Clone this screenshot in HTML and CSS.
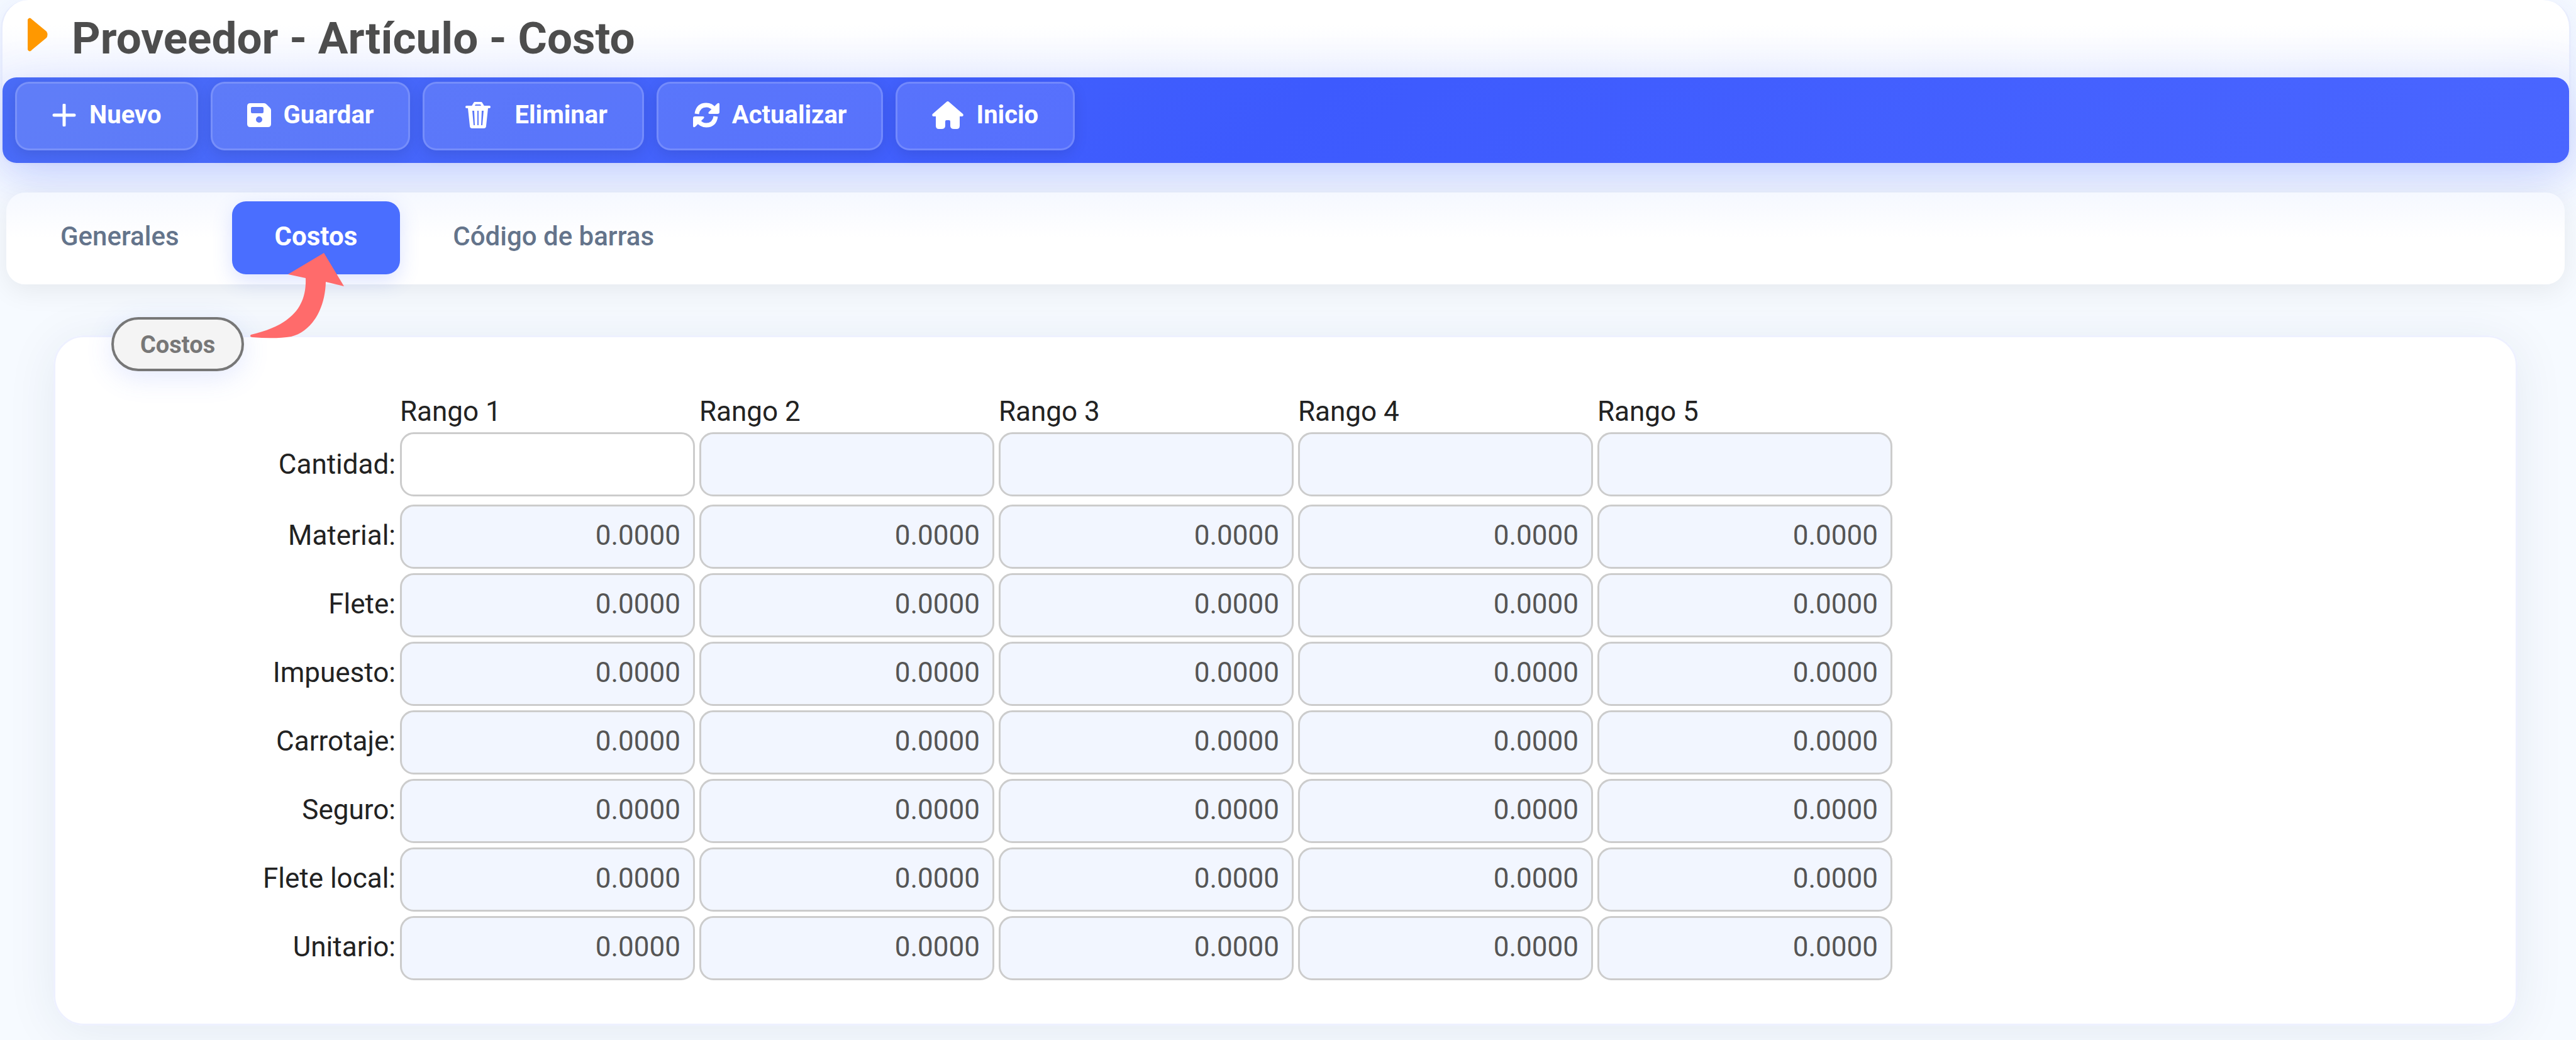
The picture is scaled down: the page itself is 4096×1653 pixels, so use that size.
FILE: index.html
```html
<!DOCTYPE html>
<html lang="es">
<head>
<meta charset="UTF-8">
<meta name="viewport" content="width=device-width,initial-scale=1">
<title>Proveedor - Artículo - Costo</title>
<link rel="stylesheet" href="styles.css">
</head>
<body>

<header class="cabecera">
  <div class="titulo">
    <svg class="flecha-titulo" viewBox="0 0 32 54"><path d="M0 3Q3-2 7 3L30 22Q33 27 30 32L7 51Q3 56 0 51Z"/></svg>
    <h1>Proveedor - Artículo - Costo</h1>
  </div>
  <div class="toolbar">
    <button type="button" id="btnNuevo">
      <svg class="ico-nuevo" viewBox="0 0 36 36"><path d="M18 2V34M2 18H34" fill="none" stroke="#fff" stroke-width="5" stroke-linecap="round"/></svg>
      Nuevo
    </button>
    <button type="button" id="btnGuardar">
      <svg class="ico-guardar" viewBox="0 0 38 38"><path fill-rule="evenodd" d="M5 0H27Q29 0 31 2L36 7Q38 9 38 11V33Q38 38 33 38H5Q0 38 0 33V5Q0 0 5 0ZM8 6Q6 6 6 8V14Q6 16 8 16H24Q26 16 26 14V8Q26 6 24 6ZM19 21A5 5 0 1 0 19 31A5 5 0 1 0 19 21Z"/></svg>
      Guardar
    </button>
    <button type="button" id="btnEliminar">
      <svg class="ico-eliminar" viewBox="0 0 68 42"><path d="M12 8H48M22 7L25 2H35L38 7" fill="none" stroke="#fff" stroke-width="4" stroke-linecap="round" stroke-linejoin="round"/><path fill-rule="evenodd" d="M14 10H46L43 38Q43 42 39 42H21Q17 42 17 38ZM21 14L23 37H25L24 14ZM29 14V37H31V14ZM36 14L35 37H37L39 14Z"/></svg>
      Eliminar
    </button>
    <button type="button" id="btnActualizar">
      <svg class="ico-actualizar" viewBox="0 0 42 40"><path d="M6 18Q8 4 21 4Q29 4 34 11" fill="none" stroke="#fff" stroke-width="7"/><path d="M42 3V15Q42 18 39 18H27Q23 18 25 15L38 2Q42-1 42 3Z"/><path d="M36 22Q34 36 21 36Q13 36 8 29" fill="none" stroke="#fff" stroke-width="7"/><path d="M0 37V25Q0 22 3 22H15Q19 22 17 25L4 38Q0 41 0 37Z"/></svg>
      Actualizar
    </button>
    <button type="button" id="btnInicio">
      <svg class="ico-inicio" viewBox="0 0 50 44"><path d="M23 1Q25-1 27 1L49 20Q51 23 48 24H44V39Q44 44 39 44H35Q29 44 29 39V32Q29 30 27 30H23Q21 30 21 32V39Q21 44 15 44H11Q6 44 6 39V24H2Q-1 23 1 20Z"/></svg>
      Inicio
    </button>
  </div>
</header>

<nav class="tabs">
  <a href="#generales">Generales</a>
  <a href="#costos" class="activo" aria-current="page">Costos</a>
  <a href="#codigo">Código de barras</a>
</nav>

<fieldset class="panel" id="costos">
  <legend>
    Costos
    <svg class="flecha-roja" viewBox="0 0 150 136"><path d="M117 0L149 53L120 46C119 90 97 125 65 133Q40 137 3 134Q-2 133 1 130C60 116 90 90 88 40L60 34Z"/></svg>
  </legend>
  <table id="tablaCostos">
    <thead><tr>
      <td></td>
      <th scope="col" id="r1">Rango 1</th><th scope="col" id="r2">Rango 2</th><th scope="col" id="r3">Rango 3</th>
      <th scope="col" id="r4">Rango 4</th><th scope="col" id="r5">Rango 5</th>
    </tr></thead>
    <tbody></tbody>
  </table>
</fieldset>

<script>
/* ————— filas de costos ————— */
const filas = ['Cantidad','Material','Flete','Impuesto','Carrotaje','Seguro','Flete local','Unitario'];
const tb = document.querySelector('#tablaCostos tbody');
filas.forEach((f,i)=>{
  let celdas='';
  for(let n=1;n<=5;n++){
    const editable = i===0 && n===1;
    celdas+=`<td><input type="text" aria-labelledby="f${i} r${n}" value="${i===0?'':'0.0000'}" ${editable?'':'readonly'}></td>`;
  }
  tb.insertAdjacentHTML('beforeend',`<tr><th scope="row" id="f${i}">${f}:</th>${celdas}</tr>`);
});
</script>
</body>
</html>
```
FILE: styles.css
```css
:root{
  --bg:      #f6faff;
  --card:    #ffffff;
  --primary: #4a6eff;
  --borde:   #eef1ff;
  --campo:   #f2f6ff;
  --texto:   #222222;
}
*{box-sizing:border-box;margin:0;padding:0}
body{
  font-family:Roboto,sans-serif;
  font-size:44px;
  line-height:52px;
  background:var(--bg);
  color:var(--texto);
  min-height:100vh;
}
svg{fill:currentColor;flex:none}

/* ---------- Cabecera ------------- */
.cabecera{
  margin:0 8px 0 1px;
  background:linear-gradient(#fff 40px,#f3f6ff 123px);
  border:3px solid #e8edfd;
  border-top:0;
  border-radius:44px 44px 24px 24px;
  box-shadow:0 10px 60px rgba(74,108,247,.12);
}
.titulo{
  display:flex;
  align-items:flex-start;
  gap:38px;
  padding:20px 40px;
  height:123px;
}
h1{font-size:71px;line-height:82px;font-weight:700;color:#4d4d4d}
.flecha-titulo{width:32px;height:54px;margin-top:8px;color:#ff9800}

/* ---------- Barra de botones ----------- */
.toolbar{
  display:flex;
  gap:20px;
  padding:7px 20px 20px;
  border-radius:22px;
  background:linear-gradient(135deg,#4a6cf7 0%,#3d5afe 50%,#4a66ff 100%);
  box-shadow:0 22px 88px rgba(61,90,254,.2);
}
button{
  display:flex;
  align-items:center;
  gap:20px;
  height:109px;
  padding:0 55px 4px;
  font:700 40px/52px Roboto,sans-serif;
  color:#fff;
  background:rgba(255,255,255,.12);
  border:3px solid rgba(255,255,255,.16);
  border-radius:22px;
  box-shadow:0 6px 22px rgba(0,0,0,.1);
  cursor:pointer;
}
.ico-nuevo{width:40px;height:36px}
.ico-guardar{width:38px;height:38px}
.ico-eliminar{width:68px;height:42px}
.ico-actualizar{width:42px;height:40px}
.ico-inicio{width:50px;height:44px}

/* ---------- Pestañas -------------- */
.tabs{
  display:flex;
  gap:16px;
  margin:44px 18px 0 10px;
  padding:14px 18px 16px;
  border-radius:30px;
  background:linear-gradient(#f5f8ff,#fff 50%);
  box-shadow:0 10px 44px rgba(0,0,0,.07);
}
.tabs a{
  padding:30px 68px 34px;
  border-radius:22px;
  font-size:42px;
  font-weight:500;
  color:#64748b;
  text-decoration:none;
}
.tabs a.activo{
  background:var(--primary);
  color:#fff;
  font-weight:700;
  box-shadow:0 10px 32px rgba(74,110,255,.2);
}

/* ---------- Panel de costos ---- */
.panel{
  display:flow-root;
  margin:81px 93px 0 85px;
  padding:0 89px 62px;
  background:var(--card);
  border:3px solid var(--borde);
  border-radius:48px;
  box-shadow:0 10px 80px rgba(30,50,90,.08);
}
.panel legend{
  float:left;
  position:relative;
  margin-top:-32px;
  padding:14px 42px 12px;
  font-size:38px;
  font-weight:700;
  color:#777;
  background:#f4f4f4;
  border:4px solid #777;
  border-radius:44px;
  box-shadow:0 10px 44px rgba(74,108,247,.15);
}
.flecha-roja{
  position:absolute;
  left:100%;
  bottom:48px;
  width:150px;
  height:136px;
  margin-left:14px;
  color:#ff6b6b;
}

table{
  clear:both;
  border-spacing:7px;
  margin-top:85px;
}
th{font-weight:400;text-align:left}
thead td{width:445px}
tbody th{text-align:right;padding-bottom:4px}
tbody tr:first-child > *{padding-bottom:6px}
input{
  display:block;
  width:469px;
  height:102px;
  padding:0 20px 4px;
  font:400 44px/52px Roboto,sans-serif;
  text-align:right;
  color:#555;
  background:#fff;
  border:3px solid #ccc;
  border-radius:22px;
}
input[readonly]{background:var(--campo)}
```
